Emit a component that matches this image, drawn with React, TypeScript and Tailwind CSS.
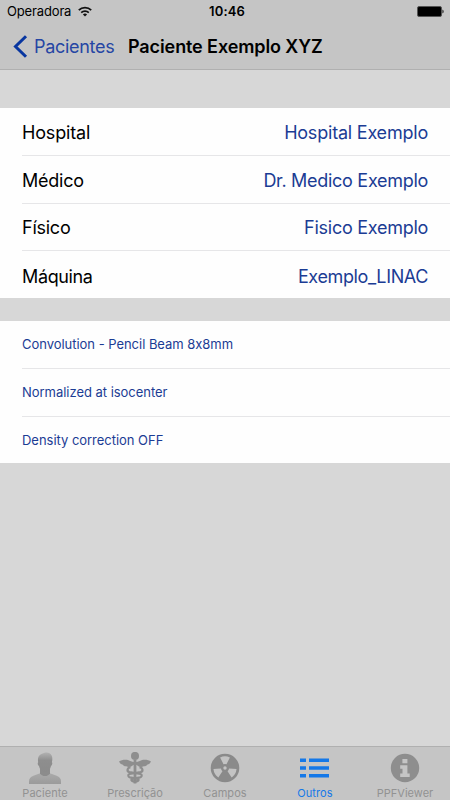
import React from "react";

const details = [
  { label: "Hospital", value: "Hospital Exemplo", spacing: "tracking-[-0.21px]", labelSpacing: "tracking-[-0.17px]" },
  { label: "Médico", value: "Dr. Medico Exemplo", spacing: "tracking-[-0.29px]", labelSpacing: "tracking-[-0.25px]" },
  { label: "Físico", value: "Fisico Exemplo", spacing: "tracking-[-0.27px]", labelSpacing: "tracking-[-0.25px]" },
  { label: "Máquina", value: "Exemplo_LINAC", spacing: "tracking-[-0.38px]", labelSpacing: "tracking-[-0.37px]" },
];

const notes = [
  "Convolution - Pencil Beam 8x8mm",
  "Normalized at isocenter",
  "Density correction OFF",
];

const PersonIcon = () => (
  <svg width="32" height="32" viewBox="0 0 32 32">
    <defs>
      <linearGradient id="hair" x1="0" y1="0" x2="0" y2="1">
        <stop offset="0" stopColor="#b2b2b2" />
        <stop offset="0.4" stopColor="#8e8e8e" />
        <stop offset="1" stopColor="#8b8b8b" />
      </linearGradient>
      <linearGradient id="shirt" x1="0" y1="0" x2="0" y2="1">
        <stop offset="0" stopColor="#a9a9a9" />
        <stop offset="1" stopColor="#9b9b9b" />
      </linearGradient>
    </defs>
    <path
      d="M0 32v-2.700c0-2.700 1.400-4.500 4.400-5.600l6-2.100h11.200l6 2.100c3 1.100 4.400 2.900 4.400 5.600V32z"
      fill="url(#shirt)"
    />
    <path
      d="M11 17v4.300c1 1.900 2.800 2.800 5 2.800s4-.9 5-2.800V17z"
      fill="#8c8c8c"
    />
    <path
      d="M9.200 10.300C8.400 6.500 9.300 3.300 12.400 2 15 .4 18.800-.3 20.500 1.300c2.700 1.300 3.400 5 2.400 9 .8.400.4 3-.9 3.700-.8 3.700-3 6.300-6 6.300s-5.200-2.600-6-6.300c-1.300-.7-1.700-3.300-.8-3.700z"
      fill="url(#hair)"
    />
  </svg>
);

const CaduceusIcon = () => (
  <svg width="32" height="32" viewBox="0 0 32 32" fill="none" stroke="#8e8e8e">
    <circle cx="16" cy="3.900" r="4" fill="#8e8e8e" stroke="none" />
    <path
      d="M0 9.500c2.500-1.700 6.500-2.300 9.500-1.300 2.500.8 4 2 6.500 2s4-1.200 6.500-2c3-1 7-.4 9.500 1.300-.7 1.700-2 2.700-3.500 3-.9 1.200-2 1.900-3.700 1.800-1.900 1.200-4.300 1-5.800-.3-.8-.7-1.500-1.200-3-1.200s-2.200.5-3 1.200c-1.500 1.300-3.900 1.500-5.800.3-1.700.1-2.800-.6-3.700-1.800-1.500-.3-2.800-1.300-3.500-3z"
      fill="#8e8e8e"
      stroke="none"
    />
    <path d="M16 8v23.500" strokeWidth="2.800" />
    <path
      d="M11.500 15.500c-3.500 0-4 4-1 4.600l11 1.900c2 .8 1.400 3-.5 3.400l-7.700 1.400c-1.600.6-1 1.900.4 2.300l2.500.8"
      strokeWidth="2.200"
    />
    <path
      d="M20.500 15.500c3.500 0 4 4 1 4.600l-11 1.900c-2 .8-1.400 3 .5 3.400l7.700 1.400c1.600.6 1 1.900-.4 2.300l-2.500.8"
      strokeWidth="2.200"
    />
  </svg>
);

const RadiationIcon = () => (
  <svg width="30" height="30" viewBox="0 0 30 30">
    <circle cx="15" cy="15" r="14.300" fill="#8a8a8a" />
    <g fill="#c3c3c3">
      <path id="sector" d="M10.100 4.500A11.600 11.600 0 0 1 19.900 4.500L16.500 11.200A4.100 4.100 0 0 0 13.500 11.200z" />
      <use href="#sector" transform="rotate(120 15 15)" />
      <use href="#sector" transform="rotate(240 15 15)" />
      <circle cx="15" cy="15" r="1.700" />
    </g>
  </svg>
);

const ListIcon = () => (
  <svg className="-ml-px" width="30" height="20" viewBox="0 0 30 20" fill="#1478e8">
    <path d="M0 .5h6v3.500H0zM9 .5h20v3.500H9zM0 8.200h6v3.500H0zM9 8.200h20v3.500H9zM0 15.900h6v3.500H0zM9 15.900h20v3.500H9z" />
  </svg>
);

const InfoIcon = () => (
  <svg className="-ml-px" width="30" height="30" viewBox="0 0 30 30">
    <circle cx="15" cy="15" r="14.200" fill="#8e8e8e" />
    <path
      d="M12.400 6h5v4.200h-5zM10.200 12.200h7.200v8.300h2.300V24H10.200v-3.500h2.300v-4.800h-2.300z"
      fill="#c5c5c5"
    />
  </svg>
);

const tabs = [
  { name: "Paciente", icon: <PersonIcon />, spacing: "tracking-[0.05px]" },
  { name: "Prescrição", icon: <CaduceusIcon />, spacing: "tracking-[0px]" },
  { name: "Campos", icon: <RadiationIcon />, spacing: "tracking-[0.05px]" },
  { name: "Outros", icon: <ListIcon />, spacing: "tracking-[0.1px]", active: true },
  { name: "PPFViewer", icon: <InfoIcon />, spacing: "tracking-[0px]" },
];

const StatusBar: React.FC = () => (
  <div className="grid h-[23px] grid-cols-3 items-center pr-[6px] pl-[7px] text-[13px] leading-none">
    <div className="flex items-center gap-[7px]">
      <span className="tracking-[-0.15px]">Operadora</span>
      <svg className="-mt-px" width="14" height="11" viewBox="0 0 14 11" fill="none" stroke="#111">
        <path d="M.8 4.200a8.800 8.800 0 0 1 12.400 0" strokeWidth="1.800" />
        <path d="M3.200 6.600a5.400 5.400 0 0 1 7.600 0" strokeWidth="1.700" />
        <path d="M4.900 8.500a3 3 0 0 1 4.200 0L7 10.600z" fill="#111" stroke="none" />
      </svg>
    </div>
    <span className="pl-[3px] text-center font-semibold tracking-[0.15px]">10:46</span>
    <svg className="justify-self-end" width="27" height="11" viewBox="0 0 27 11">
      <rect x=".5" y=".5" width="24" height="10" rx="1.500" stroke="#555" />
      <path d="M25.500 3.500c1.400.5 1.400 3.500 0 4z" />
    </svg>
  </div>
);

const App: React.FC = () => {
  return (
    <div className="flex h-[800px] w-[450px] flex-col overflow-hidden bg-[#d7d7d7] font-['Inter','Liberation_Sans',sans-serif] text-black">
      <header className="h-[70px] border-b border-[#b0b0b0] bg-[#c5c5c5]">
        <StatusBar />
        <div className="flex h-[46px] items-center pl-[13px]">
          <svg width="15" height="23" viewBox="0 0 15 23" fill="none">
            <path d="M13 1.200 2.500 11.500 13 21.800" stroke="#0836a0" strokeWidth="3" />
          </svg>
          <span className="ml-[6px] w-[80px] text-[18px] tracking-[-0.3px] text-[#2546a4]">
            Pacientes
          </span>
          <h1 className="ml-[14px] text-[18px] font-semibold tracking-[-0.1px] whitespace-nowrap">
            Paciente Exemplo XYZ
          </h1>
        </div>
      </header>
      <main className="flex-1 pt-[38px]">
        <section className="h-[190px] bg-[#fefefe] pl-[22px]">
          {details.map(({ label, value, spacing, labelSpacing }, i) => (
            <div
              key={label}
              className={`flex h-[47.800px] items-center justify-between pt-[2px] pr-[22px] text-[18px] ${i < 3 ? "border-b border-[#e6e6e8]" : ""}`}
            >
              <span className={labelSpacing}>{label}</span>
              <span className={`text-[#1b3c94] ${spacing}`}>{value}</span>
            </div>
          ))}
        </section>
        <section className="mt-[23px] h-[142px] bg-[#fefefe] pl-[22px]">
          {notes.map((note, i) => (
            <div
              key={note}
              className={`flex h-[47.900px] items-center pt-[1px] text-[13px] tracking-[-0.03px] text-[#1b3c94] ${i < 2 ? "border-b border-[#e6e6e8]" : ""}`}
            >
              {note}
            </div>
          ))}
        </section>
      </main>
      <nav className="grid h-[54px] grid-cols-5 border-t border-[#b0b0b0] bg-[#c5c5c5]">
        {tabs.map(({ name, icon, spacing, active }) => (
          <div key={name} className="flex flex-col items-center pt-[5px]">
            <div className="flex h-[32px] items-center">{icon}</div>
            <span
              className={`mt-[2px] text-[11px] leading-[14px] ${spacing} ${active ? "text-[#1478e8]" : "text-[#929292]"}`}
            >
              {name}
            </span>
          </div>
        ))}
      </nav>
    </div>
  );
};

export default App;
